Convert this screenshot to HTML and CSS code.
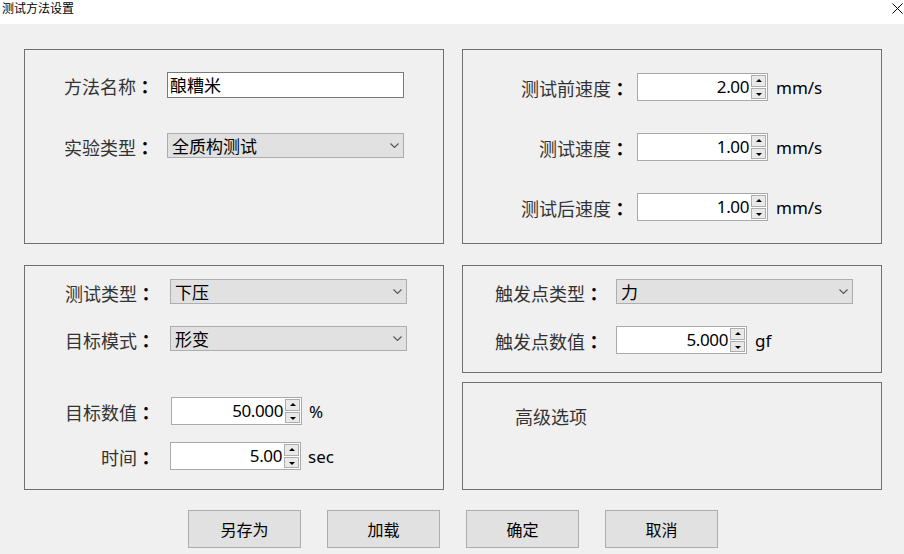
FILE: index.html
```html
<!DOCTYPE html>
<html lang="zh-CN">
<head>
<meta charset="utf-8">
<title>测试方法设置</title>
<link rel="stylesheet" href="styles.css">
</head>
<body>
<div class="titlebar">
  <span class="title">测试方法设置</span>
  <svg class="close" width="11" height="11" viewBox="0 0 11 11"><path d="M0.5 0.5 L10.5 10.5 M10.5 0.5 L0.5 10.5" stroke="#000" stroke-width="1" fill="none"/></svg>
</div>
<div class="content">
  <div class="grid">
    <section class="panel p-name">
      <div class="row r1">
        <span class="label">方法名称<span class="colon" lang="zh-TW">：</span></span>
        <div class="textbox">酿糟米</div>
      </div>
      <div class="row r2">
        <span class="label">实验类型<span class="colon" lang="zh-TW">：</span></span>
        <div class="select">全质构测试<svg class="chev" width="9" height="5" viewBox="0 0 9 5"><path d="M0.5 0.5 L4.5 4.5 L8.5 0.5" stroke="#555" stroke-width="1.1" fill="none"/></svg></div>
      </div>
    </section>

    <section class="panel p-speed">
      <div class="row">
        <span class="label">测试前速度<span class="colon" lang="zh-TW">：</span></span>
        <div class="spin"><span class="val">2.00</span><span class="btns"><span class="up"></span><span class="down"></span></span></div>
        <span class="unit">mm/s</span>
      </div>
      <div class="row">
        <span class="label">测试速度<span class="colon" lang="zh-TW">：</span></span>
        <div class="spin"><span class="val">1.00</span><span class="btns"><span class="up"></span><span class="down"></span></span></div>
        <span class="unit">mm/s</span>
      </div>
      <div class="row">
        <span class="label">测试后速度<span class="colon" lang="zh-TW">：</span></span>
        <div class="spin"><span class="val">1.00</span><span class="btns"><span class="up"></span><span class="down"></span></span></div>
        <span class="unit">mm/s</span>
      </div>
    </section>

    <section class="panel p-test">
      <div class="row r-s1">
        <span class="label">测试类型<span class="colon" lang="zh-TW">：</span></span>
        <div class="select">下压<svg class="chev" width="9" height="5" viewBox="0 0 9 5"><path d="M0.5 0.5 L4.5 4.5 L8.5 0.5" stroke="#555" stroke-width="1.1" fill="none"/></svg></div>
      </div>
      <div class="row r-s2">
        <span class="label">目标模式<span class="colon" lang="zh-TW">：</span></span>
        <div class="select">形变<svg class="chev" width="9" height="5" viewBox="0 0 9 5"><path d="M0.5 0.5 L4.5 4.5 L8.5 0.5" stroke="#555" stroke-width="1.1" fill="none"/></svg></div>
      </div>
      <div class="row r-n1">
        <span class="label">目标数值<span class="colon" lang="zh-TW">：</span></span>
        <div class="spin shift"><span class="val">50.000</span><span class="btns"><span class="up"></span><span class="down"></span></span></div>
        <span class="unit">%</span>
      </div>
      <div class="row r-n2">
        <span class="label">时间<span class="colon" lang="zh-TW">：</span></span>
        <div class="spin"><span class="val">5.00</span><span class="btns"><span class="up"></span><span class="down"></span></span></div>
        <span class="unit">sec</span>
      </div>
    </section>

    <div class="right-col">
      <section class="panel p-trigger">
        <div class="row r-s1">
          <span class="label">触发点类型<span class="colon" lang="zh-TW">：</span></span>
          <div class="select">力<svg class="chev" width="9" height="5" viewBox="0 0 9 5"><path d="M0.5 0.5 L4.5 4.5 L8.5 0.5" stroke="#555" stroke-width="1.1" fill="none"/></svg></div>
        </div>
        <div class="row r-s2">
          <span class="label">触发点数值<span class="colon" lang="zh-TW">：</span></span>
          <div class="spin"><span class="val">5.000</span><span class="btns"><span class="up"></span><span class="down"></span></span></div>
          <span class="unit">gf</span>
        </div>
      </section>
      <section class="panel p-adv">
        <span class="adv-title">高级选项</span>
      </section>
    </div>
  </div>

  <div class="buttons">
    <button class="btn">另存为</button>
    <button class="btn">加载</button>
    <button class="btn">确定</button>
    <button class="btn">取消</button>
  </div>
</div>
</body>
</html>
```

FILE: styles.css
```css
* { box-sizing: border-box; }
html, body { margin: 0; padding: 0; }
body {
  width: 904px;
  height: 554px;
  background: #f0f0f0;
  font-family: "Noto Sans CJK SC", "Noto Sans", sans-serif;
  overflow: hidden;
}
.titlebar {
  height: 24px;
  background: #ffffff;
  display: flex;
  align-items: center;
  justify-content: space-between;
  padding: 0 1px 0 2px;
}
.title {
  font-size: 12px;
  line-height: 14px;
  color: #000;
  margin-top: -8px;
}
.close {
  margin-top: -8px;
  margin-right: 0px;
}
.content {
  padding: 25px 0 0 24px;
}
.grid {
  display: grid;
  grid-template-columns: 420px 420px;
  grid-template-rows: 195px 225px;
  column-gap: 18px;
  row-gap: 21px;
}
.panel {
  border: 1px solid #6f6f6f;
}
.right-col {
  display: flex;
  flex-direction: column;
  gap: 9px;
}
.right-col .panel { height: 108px; }

.row {
  display: flex;
  align-items: center;
}
.label {
  flex-shrink: 0;
  text-align: right;
  font-size: 18px;
  line-height: 20px;
  color: #333;
  white-space: nowrap;
  position: relative;
  top: 1px;
}
.colon {
  font-family: "Noto Sans CJK TC", "Noto Sans CJK SC", sans-serif;
  color: #000;
  font-weight: bold;
}
.textbox, .select {
  font-size: 17px;
  color: #000;
  white-space: nowrap;
}
.textbox {
  width: 237px;
  height: 26px;
  border: 1px solid #7a7a7a;
  background: #fff;
  padding: 0 2px;
  line-height: 24px;
}
.select {
  width: 237px;
  height: 25px;
  border: 1px solid #adadad;
  background: #e1e1e1;
  padding: 0 0 0 4px;
  line-height: 23px;
  display: flex;
  align-items: center;
  justify-content: space-between;
}
.chev { margin-right: 4px; }

.spin {
  width: 131px;
  height: 28px;
  border: 1px solid #a9a9a9;
  background: #fff;
  display: flex;
  align-items: center;
  justify-content: flex-end;
  padding: 1px 1px 1px 0;
}
.val {
  font-family: "Noto Sans", sans-serif;
  font-size: 17px;
  letter-spacing: -0.4px;
  line-height: 20px;
  color: #000;
  margin-right: 2px;
}
.btns {
  width: 15px;
  height: 24px;
  display: flex;
  flex-direction: column;
  gap: 1px;
}
.up, .down {
  flex: 1;
  border: 1px solid #adadad;
  background: #e9e9e9;
  position: relative;
}
.up::after, .down::after {
  content: "";
  position: absolute;
  left: 4px;
  width: 0; height: 0;
  border-left: 3px solid transparent;
  border-right: 3px solid transparent;
}
.up::after { top: 3px; border-bottom: 3px solid #000; }
.down::after { top: 4px; border-top: 3px solid #000; }

.unit {
  font-family: "Noto Sans", sans-serif;
  font-size: 17px;
  color: #000;
  margin-left: 8px;
}

/* panel 1 */
.p-name { padding-top: 22px; padding-left: 0; }
.p-name .label { width: 129px; margin-right: 13px; }
.p-name .r2 { margin-top: 35px; }

/* panel 2 */
.p-speed { padding-top: 23px; display: flex; flex-direction: column; gap: 32px; }
.p-speed .label { width: 166px; margin-right: 8px; }

/* panel 3 */
.p-test { padding-top: 13px; }
.p-test .label { width: 130px; margin-right: 15px; }
.p-test .r-s2 { margin-top: 22px; }
.p-test .r-n1 { margin-top: 46px; }
.p-test .r-n2 { margin-top: 17px; }
.p-test .unit { margin-left: 7px; }
.spin.shift { margin-left: 1px; }

/* panel 4 */
.p-trigger { padding-top: 13px; }
.p-trigger .label { width: 140px; margin-right: 13px; }
.p-trigger .r-s2 { margin-top: 22px; }

/* panel 5 */
.p-adv { padding: 22px 0 0 52px; }
.adv-title {
  font-size: 18px;
  line-height: 20px;
  color: #333;
}

.buttons {
  display: flex;
  gap: 26px;
  margin-top: 20px;
  padding-left: 164px;
}
.btn {
  width: 113px;
  height: 38px;
  border: 1px solid #adadad;
  background: #e1e1e1;
  font-family: "Noto Sans CJK SC", sans-serif;
  font-size: 16px;
  color: #000;
  padding: 0;
  border-radius: 0;
}
```
